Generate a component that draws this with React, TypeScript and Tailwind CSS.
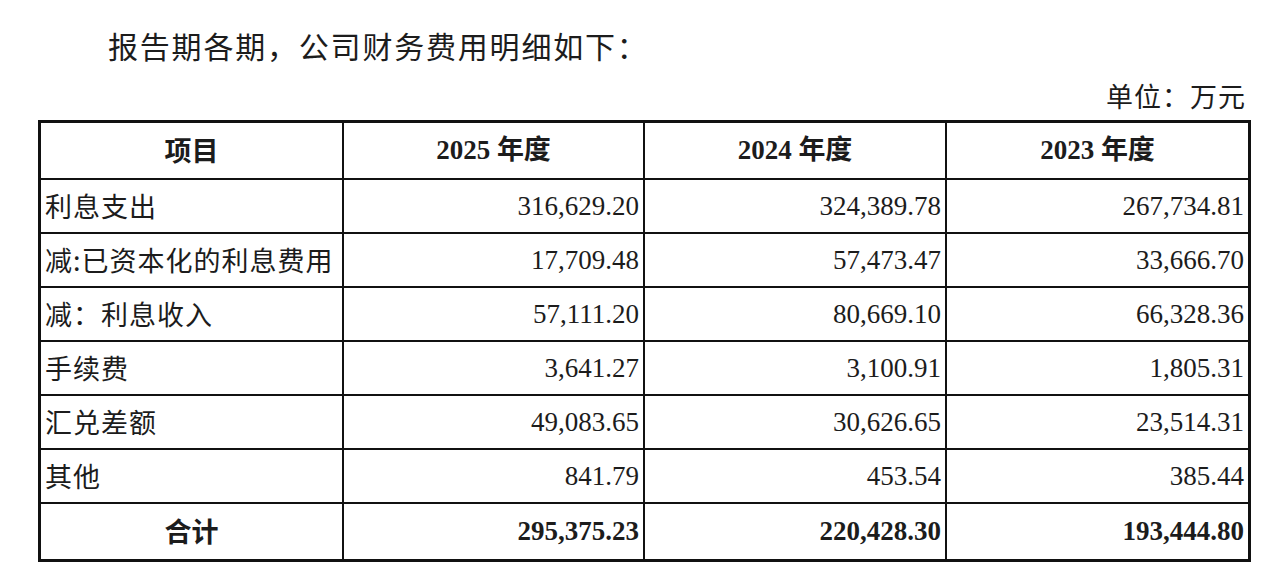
import React from "react";

const rows: [string, string, string, string][] = [
  ["利息支出", "316,629.20", "324,389.78", "267,734.81"],
  ["减:已资本化的利息费用", "17,709.48", "57,473.47", "33,666.70"],
  ["减：利息收入", "57,111.20", "80,669.10", "66,328.36"],
  ["手续费", "3,641.27", "3,100.91", "1,805.31"],
  ["汇兑差额", "49,083.65", "30,626.65", "23,514.31"],
  ["其他", "841.79", "453.54", "385.44"],
];

const cjk = "font-['Noto_Sans_CJK_SC',sans-serif]";
const serif = "font-['Liberation_Serif','Noto_Sans_CJK_SC',serif]";

export default function App() {
  return (
    <div className="w-[1286px] h-[576px] bg-white text-[#1c1c1c] overflow-hidden">
      <div className={`pl-[108px] pt-[24px] h-[72px] text-[30px] leading-[42px] tracking-[1.8px] ${cjk}`}>
        报告期各期，公司财务费用明细如下：
      </div>
      <div className={`flex justify-end pr-[40px] h-[48px] items-center text-[27px] leading-[36px] tracking-[1px] ${cjk}`}>
        单位：万元
      </div>
      <div className="ml-[38px] w-[1213px] border-[3px] border-[#111] bg-[#111] grid grid-cols-[301px_299px_300px_301px] grid-rows-[55px_52px_52px_52px_52px_52px_52px_55px] gap-[2px]">
        <div className={`bg-white flex items-center justify-center font-bold text-[27px] ${cjk}`}>项目</div>
        <div className={`bg-white flex items-center justify-center font-bold text-[27px] ${serif}`}>2025 年度</div>
        <div className={`bg-white flex items-center justify-center font-bold text-[27px] ${serif}`}>2024 年度</div>
        <div className={`bg-white flex items-center justify-center font-bold text-[27px] ${serif}`}>2023 年度</div>
        {rows.map((r) => (
          <React.Fragment key={r[0]}>
            <div className={`bg-white flex items-center pl-[4px] text-[27px] tracking-[1px] whitespace-nowrap ${cjk}`}>{r[0]}</div>
            <div className={`bg-white flex items-center justify-end pr-[4px] text-[27px] ${serif}`}>{r[1]}</div>
            <div className={`bg-white flex items-center justify-end pr-[4px] text-[27px] ${serif}`}>{r[2]}</div>
            <div className={`bg-white flex items-center justify-end pr-[4px] text-[27px] ${serif}`}>{r[3]}</div>
          </React.Fragment>
        ))}
        <div className={`bg-white flex items-center justify-center font-bold text-[27px] ${cjk}`}>合计</div>
        <div className={`bg-white flex items-center justify-end pr-[4px] font-bold text-[27px] ${serif}`}>295,375.23</div>
        <div className={`bg-white flex items-center justify-end pr-[4px] font-bold text-[27px] ${serif}`}>220,428.30</div>
        <div className={`bg-white flex items-center justify-end pr-[4px] font-bold text-[27px] ${serif}`}>193,444.80</div>
      </div>
    </div>
  );
}
